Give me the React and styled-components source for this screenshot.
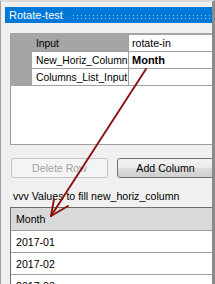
import React from 'react'
import styled, { createGlobalStyle } from 'styled-components'

const GlobalStyle = createGlobalStyle`
  html, body {
    margin: 0;
    padding: 0;
    background: #f0f0f0;
  }
  * {
    box-sizing: border-box;
  }
`

const font = `"Liberation Sans", Arial, sans-serif`

const Window = styled.div`
  position: relative;
  width: 215px;
  height: 284px;
  overflow: hidden;
  background: #f0f0f0;
  border-top: 2px solid #dadada;
  border-left: 1px solid #a0a0a0;
  border-right: 3px solid #8a8a8a;
  padding-top: 5px;
  font-family: ${font};
  font-size: 10.6px;
  color: #000;
`

const TitleBar = styled.div`
  display: flex;
  align-items: center;
  height: 16px;
  margin-left: 4px;
  padding-left: 4px;
  background: #0078d7;
  color: #fff;
  font-size: 11px;
`

const Grip = styled.div`
  flex: 1;
  height: 4px;
  margin-left: 10px;
  margin-top: 3px;
  background-image: radial-gradient(circle at 0.5px 0.5px, rgba(255, 255, 255, 0.6) 0.6px, transparent 0.9px);
  background-size: 4px 3px;
`

const PropGrid = styled.div`
  margin: 10px 0 0 9px;
  width: 202px;
  height: 112px;
  background: #fff;
  border-left: 1px solid #a0a0a0;
  border-bottom: 1px solid #a0a0a0;
  border-top: 2px solid #a5a5a5;
`

const PropRow = styled.div`
  display: grid;
  grid-template-columns: 21px 97px 1fr;
  height: 17px;
`

const RowHead = styled.div`
  background: #a5a5a5;
`

const Cell = styled.div`
  display: flex;
  align-items: center;
  padding-left: ${(p) => (p.$value ? '3px' : '4px')};
  white-space: nowrap;
  overflow: hidden;
  border-bottom: 1px solid #a0a0a0;
  border-right: ${(p) => (p.$value ? 'none' : '1px solid #a0a0a0')};
  background: ${(p) => (p.$shaded ? '#a5a5a5' : '#fff')};
  font-weight: ${(p) => (p.$bold ? 'bold' : 'normal')};
  font-size: ${(p) => (p.$bold ? '11px' : p.$value ? '10.6px' : '10.3px')};
`

const ButtonRow = styled.div`
  display: flex;
  gap: 9px;
  margin-top: 13px;
  padding-left: 10px;
`

const Button = styled.button`
  flex-shrink: 0;
  width: 97px;
  height: 20px;
  padding: 0;
  border-radius: 3px;
  font-family: ${font};
  font-size: 10.6px;
  border: 1px solid ${(p) => (p.disabled ? '#c4c4c4' : '#707070')};
  color: ${(p) => (p.disabled ? '#a3a3a3' : '#000')};
  background: ${(p) =>
    p.disabled
      ? '#f4f4f4'
      : 'linear-gradient(#f2f2f2 0%, #ebebeb 50%, #dddddd 50%, #cfcfcf 100%)'};
`

const Caption = styled.div`
  margin-top: 12px;
  padding-left: 12px;
  line-height: 13px;
  white-space: nowrap;
`

const DataGrid = styled.div`
  margin: 4px 0 0 9px;
  width: 202px;
  background: #fff;
  border-top: 1px solid #6d6d6d;
  border-left: 1px solid #6d6d6d;
`

const DataRow = styled.div`
  display: flex;
  align-items: center;
  height: ${(p) => (p.$header ? '23px' : '22px')};
  padding-left: 5px;
  border-bottom: 1px solid #a0a0a0;
  background: ${(p) => (p.$header ? '#d9d9d9' : '#fff')};
`

const Overlay = styled.svg`
  position: absolute;
  left: -1px;
  top: -2px;
  pointer-events: none;
`

const props = [
  { label: 'Input', value: 'rotate-in', shaded: true },
  { label: 'New_Horiz_Column', value: 'Month', bold: true },
  { label: 'Columns_List_Input', value: '' },
]

const months = ['2017-01', '2017-02', '2017-03']

export default function App() {
  return (
    <>
      <GlobalStyle />
      <Window>
        <TitleBar>
          <span>Rotate-test</span>
          <Grip />
        </TitleBar>

        <PropGrid>
          {props.map((p) => (
            <PropRow key={p.label}>
              <RowHead />
              <Cell $shaded={p.shaded}>{p.label}</Cell>
              <Cell $value $bold={p.bold}>{p.value}</Cell>
            </PropRow>
          ))}
        </PropGrid>

        <ButtonRow>
          <Button disabled>Delete Row</Button>
          <Button>Add Column</Button>
        </ButtonRow>

        <Caption>vvv Values to fill new_horiz_column</Caption>

        <DataGrid>
          <DataRow $header>Month</DataRow>
          {months.map((m) => (
            <DataRow key={m}>{m}</DataRow>
          ))}
        </DataGrid>

        <Overlay width="215" height="284" viewBox="0 0 215 284">
          <g stroke="#8b1010" strokeWidth="1.9" strokeLinecap="round" fill="none">
            <line x1="146" y1="69" x2="51" y2="216" />
            <line x1="51" y1="216" x2="54" y2="199" />
            <line x1="51" y1="216" x2="68" y2="206" />
          </g>
        </Overlay>
      </Window>
    </>
  )
}
